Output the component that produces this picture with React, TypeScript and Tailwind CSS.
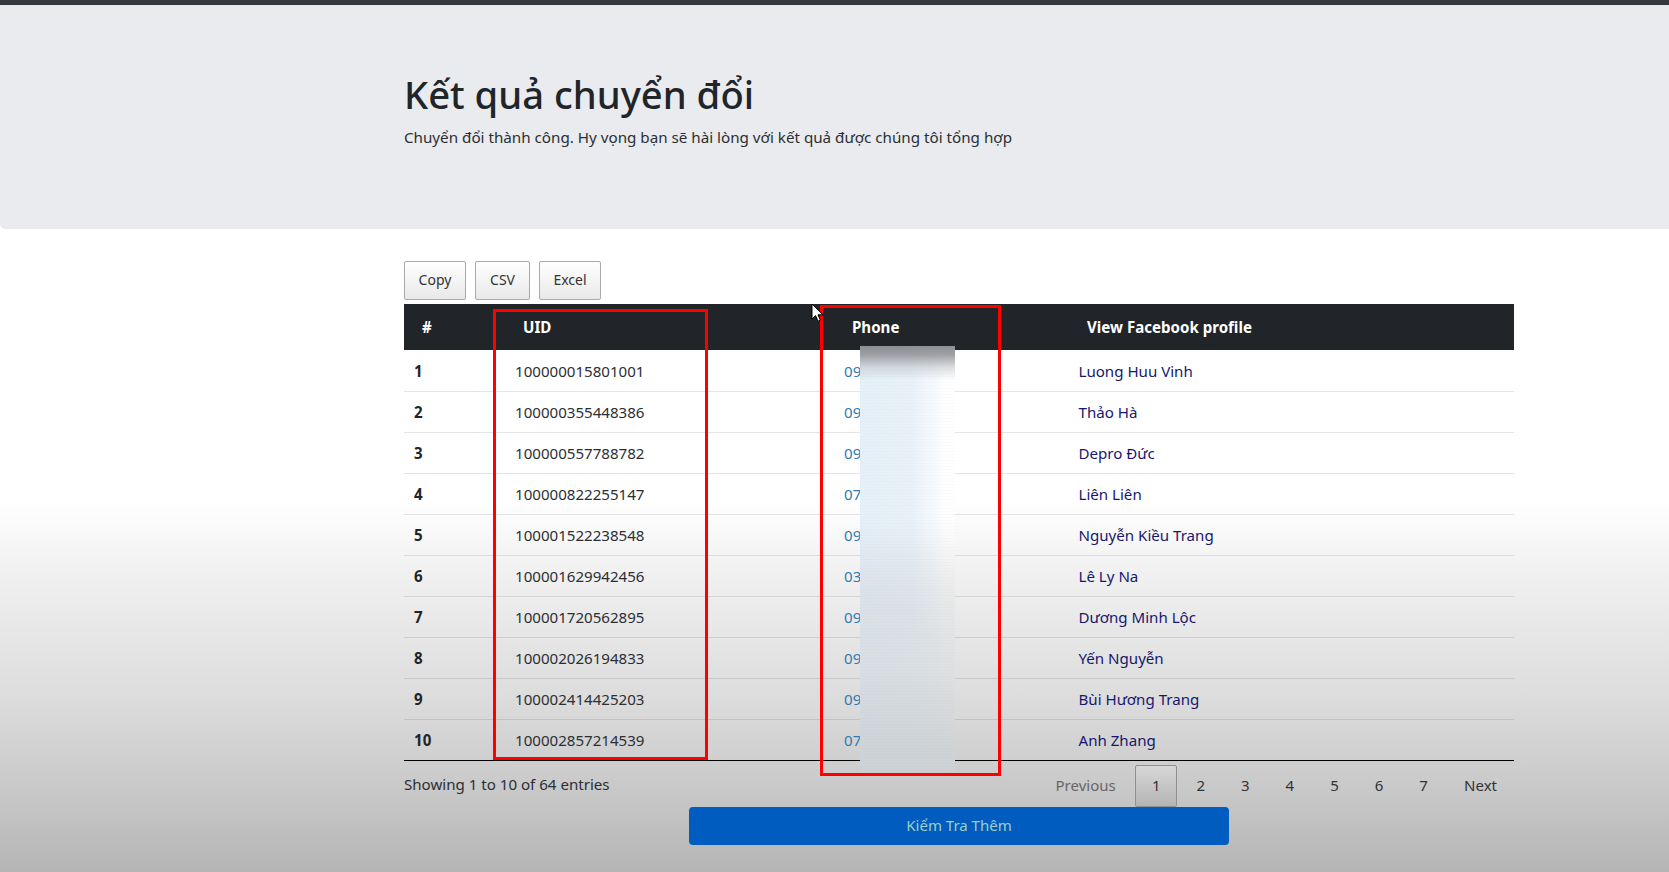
import React from "react";

const rows = [
  { id: 1, uid: "100000015801001", phone: "09", name: "Luong Huu Vinh" },
  { id: 2, uid: "100000355448386", phone: "09", name: "Thảo Hà" },
  { id: 3, uid: "100000557788782", phone: "09", name: "Depro Đức" },
  { id: 4, uid: "100000822255147", phone: "07", name: "Liên Liên" },
  { id: 5, uid: "100001522238548", phone: "09", name: "Nguyễn Kiều Trang" },
  { id: 6, uid: "100001629942456", phone: "03", name: "Lê Ly Na" },
  { id: 7, uid: "100001720562895", phone: "09", name: "Dương Minh Lộc" },
  { id: 8, uid: "100002026194833", phone: "09", name: "Yến Nguyễn" },
  { id: 9, uid: "100002414425203", phone: "09", name: "Bùi Hương Trang" },
  { id: 10, uid: "100002857214539", phone: "07", name: "Anh Zhang" },
];

const ExportButton = ({ label, width }: { label: string; width: string }) => (
  <button
    className={`${width} h-[39px] rounded-[2px] border border-[#a9a9a9] bg-[linear-gradient(to_bottom,#ffffff,#e9e9e9)] pb-[2px] text-[14px] text-[#333]`}
  >
    {label}
  </button>
);

const PageButton = ({ label, active, muted, wide }: { label: string; active?: boolean; muted?: boolean; wide?: boolean }) => (
  <button
    className={`h-[42px] min-w-[42px] rounded-[2px] border text-[15px] ${wide ? "px-[16px]" : "px-[9px]"} ${
      active
        ? "border-[#8f8f8f] bg-[linear-gradient(to_bottom,#d8d8d8,#b4b4b4)] text-[#333]"
        : "border-transparent"
    } ${muted ? "text-[#666]" : "text-[#333]"}`}
  >
    {label}
  </button>
);

export default function App() {
  return (
    <div className="relative h-[872px] overflow-hidden bg-[linear-gradient(to_bottom,#ffffff_0,#ffffff_500px,#f1f1f1_570px,#dcdcdc_700px,#cdcdcd_770px,#b5b5b5_872px)] font-['Noto_Sans',sans-serif] text-[15.1px] text-[#2b2f33]">
      <div className="h-[5px] bg-[#343a40]" />

      <div className="h-[224px] rounded-bl-[5px] bg-[#e9ebef] pl-[404px] pt-[65px]">
        <h1 className="text-[38.2px] leading-[48px] font-medium text-[#212529]">Kết quả chuyển đổi</h1>
        <p className="mt-[7px] text-[15.2px] leading-[24px]">
          Chuyển đổi thành công. Hy vọng bạn sẽ hài lòng với kết quả được chúng tôi tổng hợp
        </p>
      </div>

      <div className="ml-[404px] w-[1110px]">
        <div className="mt-[32px] flex gap-[9px]">
          <ExportButton label="Copy" width="w-[62px]" />
          <ExportButton label="CSV" width="w-[55px]" />
          <ExportButton label="Excel" width="w-[62px]" />
        </div>

        <table className="mt-[4px] w-full table-fixed border-collapse">
          <colgroup>
            <col className="w-[99px]" />
            <col className="w-[329px]" />
            <col className="w-[234px]" />
            <col />
          </colgroup>
          <thead>
            <tr className="h-[46px] bg-[#212529] text-left font-bold text-white">
              <th className="pl-[18px]">#</th>
              <th className="pl-[20px]">UID</th>
              <th className="pl-[20px]">Phone</th>
              <th className="pl-[21px]">View Facebook profile</th>
            </tr>
          </thead>
          <tbody>
            {rows.map((row, i) => (
              <tr
                key={row.id}
                className={`h-[41px] border-b ${i === rows.length - 1 ? "border-black" : "border-black/10"}`}
              >
                <td className="pl-[10px] pt-[2px] font-bold text-[#212529]">{row.id}</td>
                <td className="pl-[12px] pt-[2px]">{row.uid}</td>
                <td className="pl-[12px] pt-[2px]">
                  <a className="text-[#2f7ab5]">{row.phone}</a>
                </td>
                <td className="pl-[12.5px] pt-[2px]">
                  <a className="text-[#17176e]">{row.name}</a>
                </td>
              </tr>
            ))}
          </tbody>
        </table>

        <div className="mt-[4px] flex items-start justify-between">
          <div className="pt-[7px] leading-[24px]">Showing 1 to 10 of 64 entries</div>
          <div className="flex gap-[2.55px]">
            <PageButton label="Previous" muted wide />
            <PageButton label="1" active />
            <PageButton label="2" />
            <PageButton label="3" />
            <PageButton label="4" />
            <PageButton label="5" />
            <PageButton label="6" />
            <PageButton label="7" />
            <PageButton label="Next" wide />
          </div>
        </div>

        <div className="flex justify-center">
          <button className="h-[38px] w-[540px] rounded-[4px] bg-[#005cbf] text-[15px] text-[#9ccfc5]">
            Kiểm Tra Thêm
          </button>
        </div>
      </div>

      {/* blurred phone numbers */}
      <div className="absolute left-[860px] top-[346px] h-[425px] w-[95px] bg-[linear-gradient(to_bottom,#8e9093_0,rgba(142,144,147,0.85)_2%,rgba(190,195,200,0.55)_5%,rgba(255,255,255,0)_8%),repeating-linear-gradient(to_bottom,rgba(0,0,0,0.015)_0,rgba(0,0,0,0.015)_1px,rgba(0,0,0,0)_1px,rgba(0,0,0,0)_3px),linear-gradient(to_bottom,rgba(222,224,226,0)_45%,rgba(222,224,226,0.6)_75%,rgba(208,211,213,0.75)_100%),linear-gradient(to_right,rgba(170,205,232,0.3)_0,rgba(170,205,232,0.26)_55%,rgba(170,205,232,0)_92%),linear-gradient(to_bottom,#ffffff_0,#ffffff_40%,#eeeeee_58%,#dfe1e2_78%,#cbced0_96%,#cdcfd0_100%)]" />

      {/* red marks drawn on the video */}
      <div className="absolute left-[493px] top-[309px] h-[451px] w-[215px] border-[3px] border-[#fe0000]" />
      <div className="absolute left-[820px] top-[305px] h-[471px] w-[181px] border-[3px] border-[#fe0000]" />

      {/* mouse cursor */}
      <svg className="absolute left-[811px] top-[303px]" width="13" height="20" viewBox="0 0 13 20">
        <path d="M1 1v15l3.6-3.4 2.4 5.6 2.4-1-2.4-5.4h5z" fill="#fff" stroke="#000" strokeWidth="1" />
      </svg>
    </div>
  );
}
